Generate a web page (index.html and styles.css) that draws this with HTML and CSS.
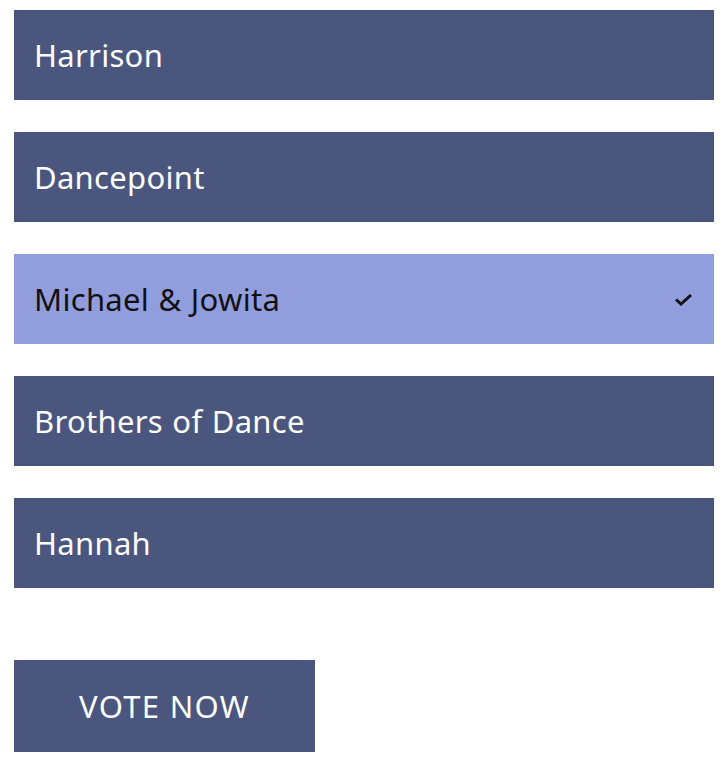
FILE: index.html
```html
<!DOCTYPE html>
<html>
<head>
<meta charset="utf-8">
<link rel="stylesheet" href="styles.css">
</head>
<body>
<div class="poll">
  <ul class="options">
    <li class="option">Harrison</li>
    <li class="option">Dancepoint</li>
    <li class="option selected">Michael &amp; Jowita
      <svg class="check" width="20" height="16" viewBox="0 0 20 16"><path d="M2 8.5 L7 13 L17 4" fill="none" stroke="#111" stroke-width="3"/></svg>
    </li>
    <li class="option">Brothers of Dance</li>
    <li class="option">Hannah</li>
  </ul>
  <button class="vote">VOTE NOW</button>
</div>
</body>
</html>
```
FILE: styles.css
```css
html, body { margin: 0; padding: 0; background: #fff; }
body { font-family: "Noto Sans", "Open Sans", sans-serif; }
.poll { padding: 10px 10px 0 14px; display: flex; flex-direction: column; align-items: flex-start; }
.options { list-style: none; margin: 0; padding: 0; display: flex; flex-direction: column; gap: 32px; width: 700px; }
.option { height: 90px; background: #4a567e; color: #fff; font-size: 31px; letter-spacing: 0.3px; word-spacing: 1px; display: flex; align-items: center; justify-content: space-between; padding: 0 20px 0 20px; box-sizing: border-box; }
.option.selected { background: #929ddd; color: #111; }
.check { display: block; }
.vote { margin-top: 72px; width: 301px; height: 92px; border: 0; background: #4a567e; color: #fff; font-family: inherit; font-size: 31px; letter-spacing: 1.3px; padding: 0; }
```
